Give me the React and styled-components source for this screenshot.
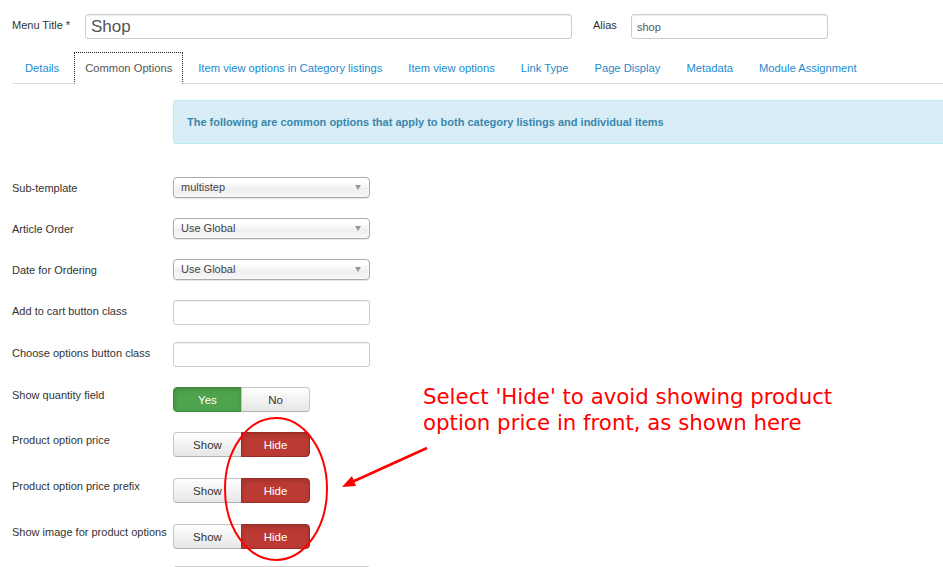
import React from "react";
import styled, { createGlobalStyle } from "styled-components";

const GlobalStyle = createGlobalStyle`
  html, body {
    margin: 0;
    padding: 0;
    background: #fff;
    overflow: hidden;
  }
  body {
    font-family: "Liberation Sans", Arial, sans-serif;
    font-size: 11px;
    color: #333;
  }
`;

const tabs = [
  "Details",
  "Common Options",
  "Item view options in Category listings",
  "Item view options",
  "Link Type",
  "Page Display",
  "Metadata",
  "Module Assignment",
];

const rows = [
  { label: "Sub-template", type: "select", value: "multistep" },
  { label: "Article Order", type: "select", value: "Use Global" },
  { label: "Date for Ordering", type: "select", value: "Use Global" },
  { label: "Add to cart button class", type: "text" },
  { label: "Choose options button class", type: "text" },
  { label: "Show quantity field", type: "toggle", options: ["Yes", "No"], active: 0 },
  { label: "Product option price", type: "toggle", options: ["Show", "Hide"], active: 1 },
  { label: "Product option price prefix", type: "toggle", options: ["Show", "Hide"], active: 1 },
  { label: "Show image for product options", type: "toggle", options: ["Show", "Hide"], active: 1 },
  { label: "", type: "text" },
];

// row heights as measured from the form
const heights = [41, 41, 41, 42, 45, 45, 46, 46, 42, 30];

const Page = styled.div`
  position: relative;
  width: 943px;
  height: 567px;
  overflow: hidden;
  padding: 14px 0 0 12px;
  box-sizing: border-box;
`;

const TitleBar = styled.div`
  display: flex;
  align-items: center;
`;

const TitleLabel = styled.label`
  font-size: 11px;
  color: #333;
  width: 73px;
  margin-top: -3px;
`;

const TitleInput = styled.div`
  box-sizing: border-box;
  width: ${(p) => p.$w}px;
  height: 25px;
  border: 1px solid #ccc;
  border-radius: 3px;
  box-shadow: inset 0 1px 1px rgba(0, 0, 0, 0.075);
  padding: 0 5px;
  display: flex;
  align-items: center;
  font-size: ${(p) => p.$fs}px;
  color: #555;
`;

const AliasLabel = styled.label`
  margin: -3px 0 0 21px;
  width: 38px;
  font-size: 11px;
`;

const TabBar = styled.div`
  display: flex;
  margin-top: 13px;
  border-bottom: 1px solid #ddd;
  height: 31px;
`;

const Tab = styled.div`
  box-sizing: border-box;
  height: 32px;
  padding: 0 ${(p) => (p.$active ? 10 : 12)}px;
  margin: 0 ${(p) => (p.$active ? 2 : 0)}px;
  display: flex;
  align-items: center;
  font-size: 11.2px;
  color: ${(p) => (p.$active ? "#555" : "#1b8bd0")};
  border: 1px solid transparent;
  ${(p) =>
    p.$active &&
    `
    border: 1px dotted #222;
    border-bottom: 1px solid #fff;
    background: #fff;
  `}
  white-space: nowrap;
`;

const Body = styled.div`
  padding-top: 16px;
`;

const Alert = styled.div`
  margin-left: 161px;
  width: 800px;
  box-sizing: border-box;
  height: 44px;
  background: #d9edf7;
  border: 1px solid #bce8f1;
  border-right: none;
  border-radius: 4px 0 0 4px;
  color: #3a87ad;
  font-weight: bold;
  font-size: 11px;
  display: flex;
  align-items: center;
  padding: 0 13px 1px;
`;

const Form = styled.div`
  display: flex;
  flex-direction: column;
  margin-top: 33px;
`;

const Row = styled.div`
  display: grid;
  grid-template-columns: 161px 197px;
  height: ${(p) => p.$h}px;
  align-items: start;
`;

const Label = styled.div`
  font-size: 11px;
  color: #333;
  padding-top: ${(p) => p.$pt}px;
  white-space: nowrap;
`;

const Select = styled.div`
  box-sizing: border-box;
  height: 21px;
  border: 1px solid #aaa;
  border-radius: 4px;
  background: linear-gradient(#fff 20%, #f4f4f4 50%, #eee 52%, #f6f6f6);
  box-shadow: 0 0 3px #fff inset, 0 1px 1px rgba(0, 0, 0, 0.1);
  display: flex;
  align-items: center;
  justify-content: space-between;
  padding: 0 8px 1px 7px;
  font-size: 11px;
  color: #444;
`;

const Caret = styled.span`
  width: 0;
  height: 0;
  border-left: 3px solid transparent;
  border-right: 3px solid transparent;
  border-top: 5px solid #999;
`;

const TextInput = styled.div`
  box-sizing: border-box;
  height: 25px;
  border: 1px solid #ccc;
  border-radius: 3px;
  box-shadow: inset 0 1px 1px rgba(0, 0, 0, 0.075);
  background: #fff;
`;

const Toggle = styled.div`
  display: flex;
  width: 137px;
  height: 25px;
`;

const ToggleBtn = styled.div`
  flex: 1;
  display: flex;
  align-items: center;
  justify-content: center;
  font-size: 11.5px;
  box-sizing: border-box;
  border: 1px solid ${(p) => (p.$on ? p.$dark : "#c5c5c5")};
  border-bottom-color: ${(p) => (p.$on ? p.$dark : "#b3b3b3")};
  border-radius: ${(p) => (p.$first ? "4px 0 0 4px" : "0 4px 4px 0")};
  ${(p) => (p.$first ? "" : "margin-left: -1px;")}
  background: ${(p) => (p.$on ? p.$bg : "linear-gradient(#fff, #e6e6e6)")};
  color: ${(p) => (p.$on ? "#fff" : "#333")};
  box-shadow: ${(p) =>
    p.$on ? "inset 0 2px 4px rgba(0,0,0,0.15)" : "inset 0 1px 0 rgba(255,255,255,0.2)"};
`;

const Note = styled.div`
  position: absolute;
  left: 423px;
  top: 384px;
  font-family: "DejaVu Sans", sans-serif;
  font-size: 21.3px;
  line-height: 26px;
  color: #ff0000;
`;

const Overlay = styled.svg`
  position: absolute;
  left: 0;
  top: 0;
  pointer-events: none;
`;

function Control({ row }) {
  if (row.type === "select") {
    return (
      <Select>
        {row.value}
        <Caret />
      </Select>
    );
  }
  if (row.type === "text") return <TextInput />;
  const yes = row.options[0] === "Yes";
  return (
    <Toggle>
      {row.options.map((o, i) => (
        <ToggleBtn
          key={o}
          $first={i === 0}
          $on={i === row.active}
          $bg={yes ? "#4ea34c" : "#bb3a33"}
          $dark={yes ? "#3f8a3d" : "#9e2c26"}
        >
          {o}
        </ToggleBtn>
      ))}
    </Toggle>
  );
}

export default function App() {
  return (
    <Page>
      <GlobalStyle />
      <TitleBar>
        <TitleLabel>Menu Title *</TitleLabel>
        <TitleInput $w={487} $fs={17}>Shop</TitleInput>
        <AliasLabel>Alias</AliasLabel>
        <TitleInput $w={197} $fs={11}>shop</TitleInput>
      </TitleBar>
      <TabBar>
        {tabs.map((t, i) => (
          <Tab key={t} $active={i === 1}>
            {t}
          </Tab>
        ))}
      </TabBar>
      <Body>
        <Alert>The following are common options that apply to both category listings and individual items</Alert>
        <Form>
          {rows.map((r, i) => (
            <Row key={i} $h={heights[i]}>
              <Label $pt={r.type === "toggle" ? 2 : 5}>{r.label}</Label>
              <Control row={r} />
            </Row>
          ))}
        </Form>
      </Body>
      <Note>
        Select 'Hide' to avoid showing product
        <br />
        option price in front, as shown here
      </Note>
      <Overlay width="943" height="567" viewBox="0 0 943 567">
        <ellipse cx="276" cy="489" rx="51" ry="71" fill="none" stroke="#ff0000" strokeWidth="2" />
        <line x1="427" y1="448" x2="352" y2="482" stroke="#ff0000" strokeWidth="2.5" />
        <polygon points="342,487 352,476 356,486" fill="#ff0000" />
      </Overlay>
    </Page>
  );
}
